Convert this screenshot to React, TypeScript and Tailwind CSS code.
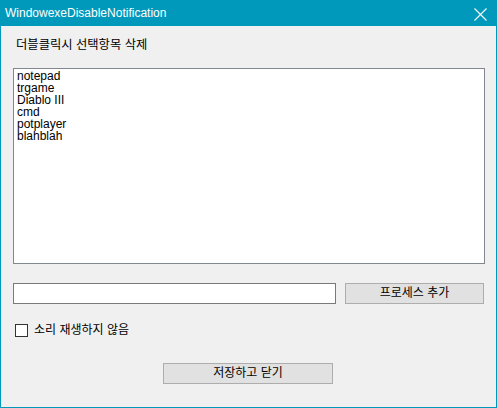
import React, { useState } from "react";

const font = "font-['Liberation_Sans','Noto_Sans_CJK_KR',sans-serif]";

const processes = ["notepad", "trgame", "Diablo III", "cmd", "potplayer", "blahblah"];

const App = () => {
  const [items, setItems] = useState<string[]>(processes);
  const [name, setName] = useState("");
  const [muted, setMuted] = useState(false);

  const addItem = () => {
    if (name.trim() === "") return;
    setItems([...items, name.trim()]);
    setName("");
  };

  return (
    <div className={`w-[497px] h-[408px] flex flex-col ${font} text-[12px] text-black`}>
      {/* title bar */}
      <div className="h-[26px] bg-[#0099bc] flex items-center justify-between pl-[5px] pr-[10px]">
        <span className="text-white text-[12px] leading-none pb-[1px]">WindowexeDisableNotification</span>
        <svg width="13" height="13" viewBox="0 0 13 13" className="mt-[3px]">
          <path d="M0.5 0.5 L12.5 12.5 M12.5 0.5 L0.5 12.5" stroke="#ffffff" strokeWidth="1.1" fill="none" />
        </svg>
      </div>

      <div className="flex-1 bg-[#f0f0f0] border-l border-r border-b border-[#0099bc] pl-[12px] flex flex-col">
        <div className="mt-[11px] ml-[3px] h-[16px] leading-[16px] text-[12.3px]">더블클릭시 선택항목 삭제</div>

        <div className="mt-[15px] w-[472px] h-[196px] bg-white border border-[#828790] pl-[3px] pt-[1px]">
          {items.map((item, i) => (
            <div
              key={i}
              className="h-[12px] leading-[12px] cursor-default"
              onDoubleClick={() => setItems(items.filter((_, j) => j !== i))}
            >
              {item}
            </div>
          ))}
        </div>

        <div className="mt-[19px] flex">
          <input
            type="text"
            value={name}
            onChange={(e) => setName(e.target.value)}
            className="w-[323px] h-[21px] bg-white border border-[#7a7a7a] px-[2px] text-[12px] outline-none"
          />
          <button
            onClick={addItem}
            className="ml-[9px] w-[139px] h-[21px] bg-[#e1e1e1] border border-[#adadad] leading-[19px] text-center"
          >
            프로세스 추가
          </button>
        </div>

        <label className="mt-[19px] ml-[2px] h-[14px] flex items-center cursor-default">
          <span
            onClick={() => setMuted(!muted)}
            className="w-[13px] h-[13px] bg-white border border-[#333333] flex items-center justify-center"
          >
            {muted && (
              <svg width="9" height="9" viewBox="0 0 9 9">
                <path d="M1 4.5 L3.5 7 L8 1.5" stroke="#333" strokeWidth="1.3" fill="none" />
              </svg>
            )}
          </span>
          <span className="ml-[6px] leading-[14px]">소리 재생하지 않음</span>
        </label>

        <button className="mt-[26px] ml-[150px] w-[170px] h-[21px] bg-[#e1e1e1] border border-[#adadad] leading-[19px] text-center">
          저장하고 닫기
        </button>
      </div>
    </div>
  );
};

export default App;
